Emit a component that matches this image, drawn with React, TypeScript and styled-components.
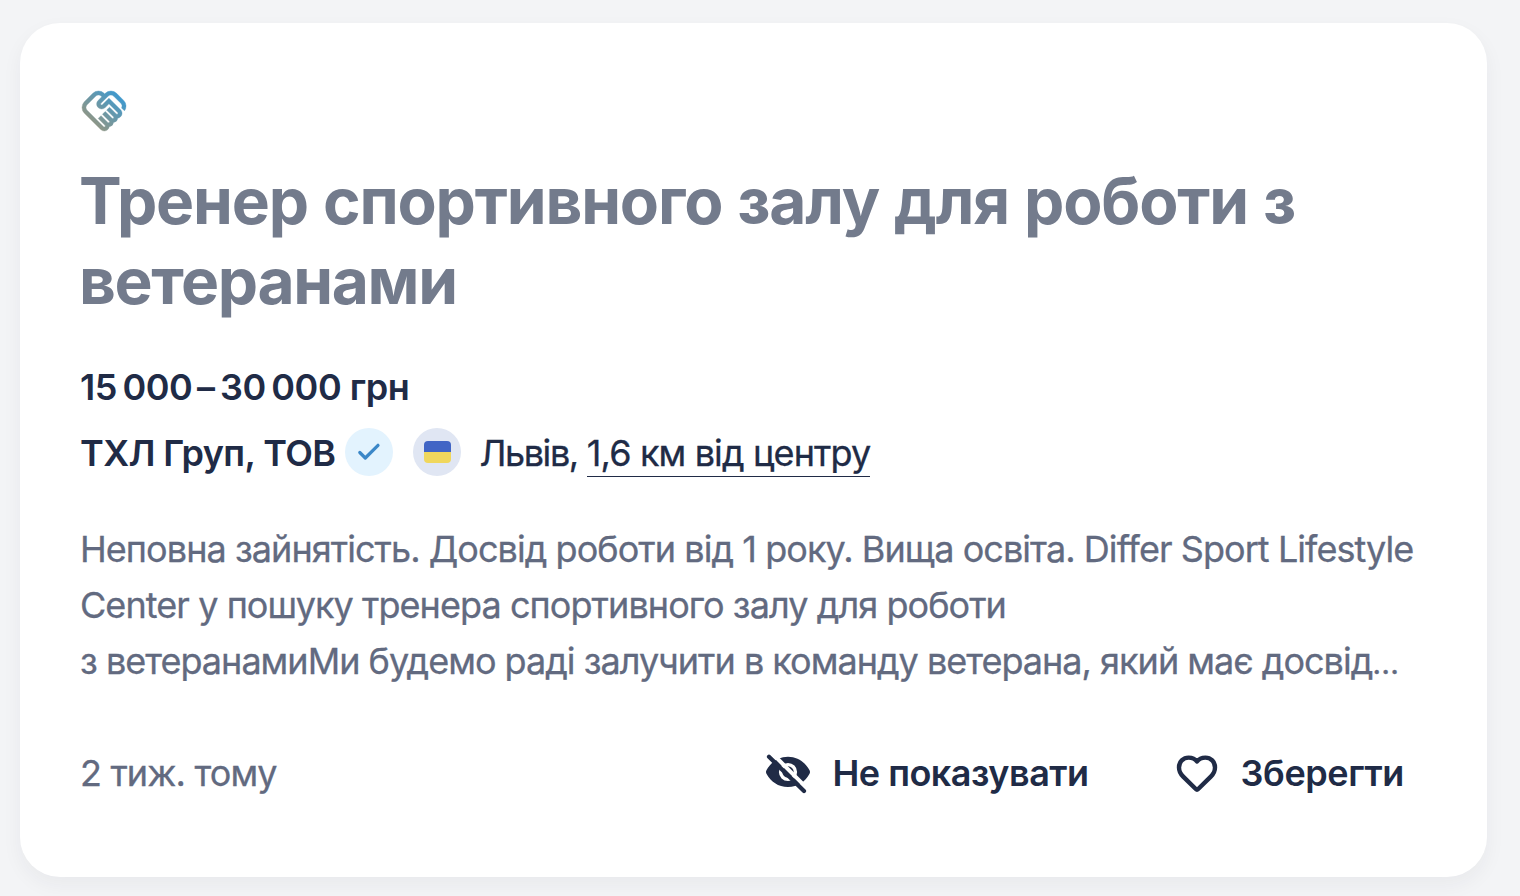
import React from 'react';
import styled, {createGlobalStyle} from 'styled-components';
import {MdOutlineHandshake} from 'react-icons/md';

const GlobalStyle = createGlobalStyle`
  body {
    margin: 0;
    background: #f3f4f6;
    font-family: Inter, "Liberation Sans", sans-serif;
    color: #202b46;
  }
`;

const Page = styled.main`
  box-sizing: border-box;
  min-height: 100vh;
  padding: 23px 0 0 20px;
`;

const Card = styled.article`
  box-sizing: border-box;
  width: 1467px;
  height: 854px;
  padding: 64px 60px;
  border-radius: 40px;
  background: #fff;
  box-shadow: 0 8px 20px rgba(31, 41, 68, .05);
`;

const Handshake = styled(MdOutlineHandshake)`
  display: block;
  transform: scaleX(-1);

  path:not([fill="none"]) {
    fill: url(#handshake);
    stroke: url(#handshake);
    stroke-width: .2px;
  }
`;

const Text = styled.span<{$track: number}>`
  display: block;
  width: max-content;
  white-space: nowrap;
  letter-spacing: ${p => p.$track}px;
`;

const Title = styled.h2`
  margin: 26px 0 0 -1px;
  font-size: 64px;
  font-weight: 700;
  line-height: 80px;
  word-spacing: 1px;
  color: #737b8c;
`;

const Salary = styled.div`
  margin-top: 38px;
  font-size: 36px;
  font-weight: 600;
  line-height: 56px;
`;

const Dash = styled.span`
  margin: 0 3px 0 2px;
`;

const Company = styled.div`
  display: flex;
  align-items: center;
  height: 56px;
  margin-top: 10px;
  font-size: 36px;
  line-height: 56px;

  strong {
    font-weight: 600;
  }
`;

const Badge = styled.span<{$color: string; $left: number}>`
  display: flex;
  align-items: center;
  justify-content: center;
  width: 48px;
  height: 48px;
  margin: -2px 0 0 ${p => p.$left}px;
  border-radius: 50%;
  background: ${p => p.$color};
`;

const Flag = styled.span`
  width: 27px;
  height: 22px;
  border-radius: 4px;
  background: linear-gradient(#4165c5 50%, #f0d75c 50%);
`;

const City = styled.span`
  display: flex;
  margin-left: 18px;
  -webkit-text-stroke: .3px;
`;

const Distance = styled.a`
  position: relative;
  margin-left: 9px;

  &::after {
    content: '';
    position: absolute;
    left: 0;
    right: 0;
    bottom: 4px;
    height: 1px;
    background: #202b46;
  }
`;

const Description = styled.p`
  margin: 40px 0 0;
  font-size: 36px;
  line-height: 56px;
  color: #626a80;
  -webkit-text-stroke: .3px;
`;

const Ellipsis = styled.span`
  font-size: 31px;
`;

const Footer = styled.footer`
  display: flex;
  align-items: center;
  height: 56px;
  margin-top: 54px;
  padding-right: 23px;
  font-size: 36px;
  line-height: 56px;
`;

const Time = styled.time`
  flex: 1;
  color: #626a80;
  -webkit-text-stroke: .3px;
`;

const Action = styled.button`
  display: flex;
  align-items: center;
  padding: 0;
  border: none;
  background: none;
  font: inherit;
  font-weight: 600;
  color: inherit;

  & + & {
    margin-left: 84px;
  }

  svg {
    width: 48px;
    height: 48px;
    margin: -3px 20px 0 0;
  }
`;

const Gradient: React.FC = () => (
  <svg width="0" height="0" style={{display: 'block'}}>
    <linearGradient id="handshake" x1="1" y1="1" x2="0" y2="0">
      <stop offset=".2" stopColor="#919684"/>
      <stop offset=".85" stopColor="#4199cc"/>
    </linearGradient>
  </svg>
);

const EyeOff: React.FC = () => (
  <svg viewBox="0 0 24 24" fill="none" strokeLinecap="round">
    <path d="M12 4.4c-4.9 0-8.6 2.8-10.7 6.6-.4.7-.4 1.3 0 2C3.400 16.800 7.100 19.500 12 19.500s8.600-2.700 10.700-6.500c.4-.7.4-1.300 0-2C20.600 7.200 16.900 4.400 12 4.400Z" fill="#202b46"/>
    <circle cx="12" cy="12" r="3.700" stroke="#fff" strokeWidth="1.700"/>
    <path d="M4 2.600 22.800 21.400" stroke="#fff" strokeWidth="2"/>
    <path d="M2.500 4.400 20 21.500" stroke="#202b46" strokeWidth="2.100"/>
  </svg>
);

const Heart: React.FC = () => (
  <svg viewBox="0 0 24 24" fill="none" stroke="#202b46" strokeWidth="2.200" strokeLinejoin="round">
    <path d="M12 6.700C10.700 4.900 9.100 4.800 7.800 4.800 5.100 4.800 3 6.900 3 9.700c0 1.900.8 3.300 2.100 4.600L11.400 20.500c.4.4.8.4 1.200 0l6.300-6.200C20.200 13 21 11.600 21 9.700c0-2.800-2.100-4.900-4.800-4.900-1.300 0-2.900.1-4.200 1.900Z"/>
  </svg>
);

const App: React.FC = () => (
  <Page>
    <GlobalStyle/>
    <Card>
      <Gradient/>
      <Handshake size={48}/>
      <Title>
        <Text $track={-1.16}>Тренер спортивного залу для роботи з</Text>
        <Text $track={-1.35}>ветеранами</Text>
      </Title>
      <Salary>
        <Text $track={-0.45}>15{'\u2009'}000{'\u200A'}<Dash>–</Dash>{'\u200A'}30{'\u2009'}000 грн</Text>
      </Salary>
      <Company>
        <strong><Text $track={-0.6}>ТХЛ Груп, ТОВ</Text></strong>
        <Badge $color="#e3f3fe" $left={10}>
          <svg width="24" height="20" viewBox="0 0 24 20" fill="none" stroke="#3b87c8" strokeWidth="3.200"
               strokeLinecap="round" strokeLinejoin="round">
            <path d="M2.800 10.500 8.300 16 21 3.300"/>
          </svg>
        </Badge>
        <Badge $color="#e0e6f3" $left={20}><Flag/></Badge>
        <City>
          <Text $track={-1.4}>Львів,</Text>
          <Distance><Text $track={-0.87}>1,6 км від центру</Text></Distance>
        </City>
      </Company>
      <Description>
        <Text $track={-0.94}>Неповна зайнятість. Досвід роботи від 1 року. Вища освіта. Differ Sport Lifestyle</Text>
        <Text $track={-0.93}>Center у пошуку тренера спортивного залу для роботи</Text>
        <Text $track={-0.99}>
          з ветеранамиМи будемо раді залучити в команду ветерана, який має досвід<Ellipsis>…</Ellipsis>
        </Text>
      </Description>
      <Footer>
        <Time><Text $track={-0.85}>2 тиж. тому</Text></Time>
        <Action><EyeOff/><Text $track={-0.5}>Не показувати</Text></Action>
        <Action><Heart/><Text $track={-0.4}>Зберегти</Text></Action>
      </Footer>
    </Card>
  </Page>
);

export default App;
